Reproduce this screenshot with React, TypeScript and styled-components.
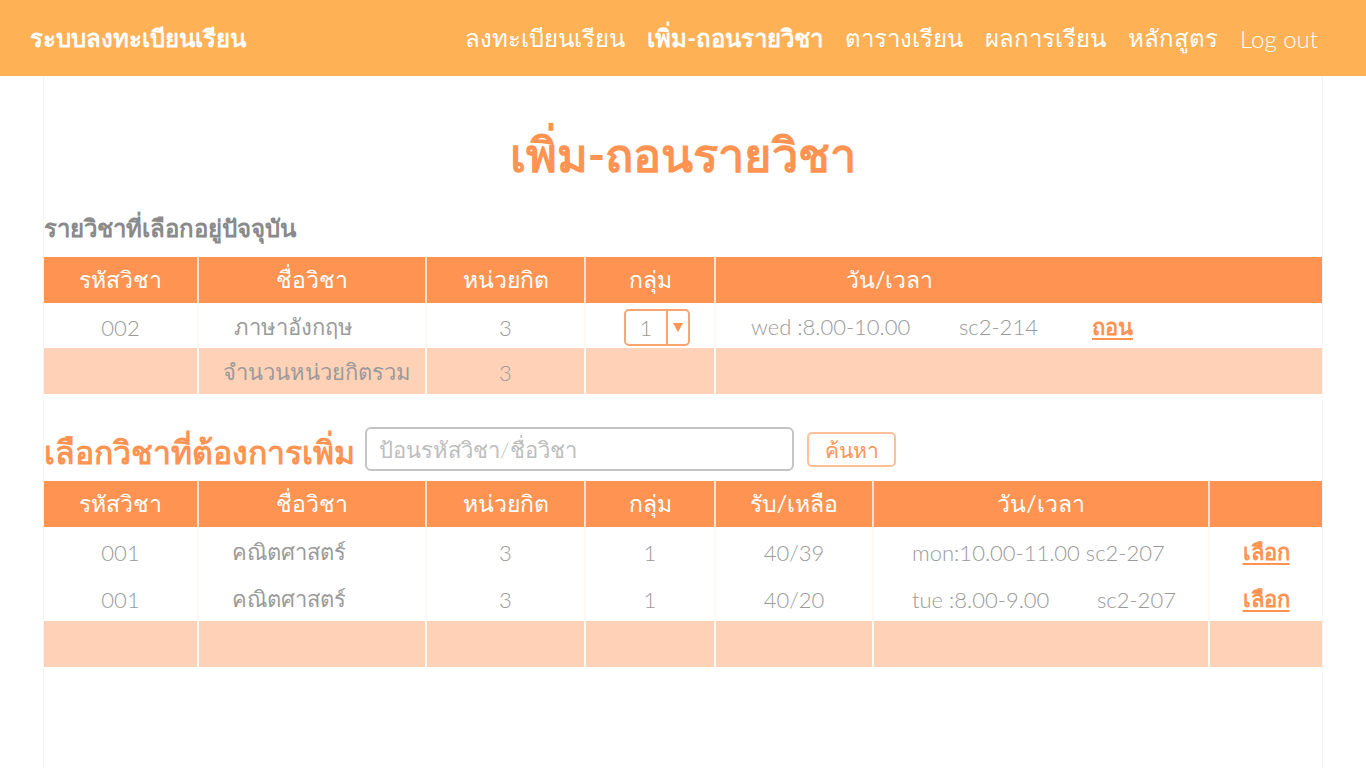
import React from "react";
import styled, { createGlobalStyle } from "styled-components";

const GlobalStyle = createGlobalStyle`
  html, body { margin: 0; padding: 0; background: #ffffff; }
  body { font-family: Lato, "Noto Sans", "DejaVu Sans", sans-serif; }
  * { box-sizing: border-box; }
`;

const ORANGE = "#FF9452";
const PEACH = "#FFD2B7";
const GRAY = "#9a9a9a";

const NavBar = styled.header`
  height: 76px;
  background: #ffb155;
  display: flex;
  align-items: center;
  justify-content: space-between;
  padding: 0 48px 0 30px;
  color: #ffffff;
`;

const Brand = styled.div`
  font-size: 24px;
  font-weight: 700;
`;

const NavList = styled.nav`
  display: flex;
  align-items: center;
  gap: 22px;
`;

const NavItem = styled.a<{ $active?: boolean }>`
  color: #ffffff;
  font-size: 24px;
  font-weight: ${(p) => (p.$active ? 700 : 300)};
  text-decoration: none;
`;

const Panel = styled.main`
  width: 1280px;
  margin: 0 auto;
  min-height: 692px;
  border-left: 1px solid #f4f4f4;
  border-right: 1px solid #f4f4f4;
  display: flex;
  flex-direction: column;
`;

const Title = styled.h1`
  margin: 51px 0 0;
  text-align: center;
  font-size: 47px;
  line-height: 54px;
  font-weight: 700;
  color: ${ORANGE};
`;

const SubHeading = styled.h2`
  margin: 32px 0 14px;
  font-size: 24px;
  line-height: 30px;
  font-weight: 700;
  color: #8a8a8a;
`;

const Table = styled.table`
  width: 100%;
  border-collapse: collapse;
  table-layout: fixed;
`;

const Th = styled.th<{ $align?: string; $pl?: number }>`
  background: ${ORANGE};
  color: #ffffff;
  font-weight: 400;
  font-size: 23px;
  height: 46px;
  padding: 0 0 0 ${(p) => p.$pl ?? 0}px;
  text-align: ${(p) => p.$align ?? "center"};
  border-right: 2px solid #ffe2d0;
  &:last-child { border-right: none; }
`;

const Tr = styled.tr<{ $peach?: boolean; $h?: number }>`
  background: ${(p) => (p.$peach ? PEACH : "#ffffff")};
  height: ${(p) => p.$h ?? 46}px;
`;

const Td = styled.td<{ $align?: string; $pl?: number }>`
  color: ${GRAY};
  font-size: 22px;
  font-weight: 300;
  padding: 3px 0 0 ${(p) => p.$pl ?? 0}px;
  text-align: ${(p) => p.$align ?? "center"};
  border-right: 2px solid #fff8f3;
  white-space: pre;
  &:last-child { border-right: none; }
`;

const Fixed = styled.span<{ $w: number }>`
  display: inline-block;
  width: ${(p) => p.$w}px;
`;

const ActionLink = styled.a`
  color: ${ORANGE};
  font-weight: 700;
  font-size: 22px;
  text-decoration: underline;
  text-decoration-thickness: 2px;
  text-underline-offset: 3px;
`;

const SelectBox = styled.div`
  display: inline-flex;
  align-items: stretch;
  width: 66px;
  height: 37px;
  border: 2px solid #ffa46e;
  border-radius: 5px;
  margin-left: 14px;
  vertical-align: middle;
`;

const SelectValue = styled.span`
  flex: 1;
  display: flex;
  align-items: center;
  justify-content: center;
  color: ${GRAY};
  font-size: 22px;
  font-weight: 300;
  border-right: 2px solid #ffa46e;
`;

const SelectArrow = styled.span`
  width: 20px;
  display: flex;
  align-items: center;
  justify-content: center;
`;

const SearchRow = styled.div`
  display: flex;
  align-items: center;
  height: 46px;
  margin: 32px 0 9px;
`;

const SectionTitle = styled.h2`
  margin: 0;
  font-size: 32px;
  font-weight: 700;
  color: ${ORANGE};
  white-space: nowrap;
  padding-top: 6px;
`;

const SearchInput = styled.input`
  width: 429px;
  height: 44px;
  margin-left: 10px;
  border: 2px solid #c4c4c4;
  border-radius: 6px;
  padding: 0 12px;
  font-family: inherit;
  font-size: 22px;
  font-weight: 300;
  color: #777;
  outline: none;
  &::placeholder { color: #bdbdbd; }
`;

const SearchButton = styled.button`
  margin-left: 13px;
  width: 89px;
  height: 35px;
  background: #ffffff;
  border: 2px solid #ffbf99;
  border-radius: 5px;
  color: ${ORANGE};
  font-family: inherit;
  font-size: 21px;
  font-weight: 300;
  padding: 0;
`;

export default function App() {
  return (
    <>
      <GlobalStyle />
      <NavBar>
        <Brand>ระบบลงทะเบียนเรียน</Brand>
        <NavList>
          <NavItem>ลงทะเบียนเรียน</NavItem>
          <NavItem $active>เพิ่ม-ถอนรายวิชา</NavItem>
          <NavItem>ตารางเรียน</NavItem>
          <NavItem>ผลการเรียน</NavItem>
          <NavItem>หลักสูตร</NavItem>
          <NavItem>Log out</NavItem>
        </NavList>
      </NavBar>
      <Panel>
        <Title>เพิ่ม-ถอนรายวิชา</Title>
        <SubHeading>รายวิชาที่เลือกอยู่ปัจจุบัน</SubHeading>
        <Table>
          <colgroup>
            <col style={{ width: 154 }} />
            <col style={{ width: 228 }} />
            <col style={{ width: 159 }} />
            <col style={{ width: 130 }} />
            <col />
          </colgroup>
          <thead>
            <tr>
              <Th>รหัสวิชา</Th>
              <Th>ชื่อวิชา</Th>
              <Th>หน่วยกิต</Th>
              <Th>กลุ่ม</Th>
              <Th $align="left" $pl={130}>วัน/เวลา</Th>
            </tr>
          </thead>
          <tbody>
            <Tr $h={45}>
              <Td>002</Td>
              <Td $align="left" $pl={35}>ภาษาอังกฤษ</Td>
              <Td>3</Td>
              <Td $align="left" $pl={24}>
                <SelectBox>
                  <SelectValue>1</SelectValue>
                  <SelectArrow>
                    <svg width="10" height="9" viewBox="0 0 10 9">
                      <polygon points="0,0 10,0 5,9" fill="#ff9452" />
                    </svg>
                  </SelectArrow>
                </SelectBox>
              </Td>
              <Td $align="left" $pl={35}>
                <Fixed $w={208}>wed :8.00-10.00</Fixed>
                <Fixed $w={133}>sc2-214</Fixed>
                <ActionLink>ถอน</ActionLink>
              </Td>
            </Tr>
            <Tr $peach>
              <Td></Td>
              <Td $align="left" $pl={24}>จำนวนหน่วยกิตรวม</Td>
              <Td>3</Td>
              <Td></Td>
              <Td></Td>
            </Tr>
          </tbody>
        </Table>

        <SearchRow>
          <SectionTitle>เลือกวิชาที่ต้องการเพิ่ม</SectionTitle>
          <SearchInput placeholder="ป้อนรหัสวิชา/ชื่อวิชา" />
          <SearchButton>ค้นหา</SearchButton>
        </SearchRow>

        <Table>
          <colgroup>
            <col style={{ width: 154 }} />
            <col style={{ width: 228 }} />
            <col style={{ width: 159 }} />
            <col style={{ width: 130 }} />
            <col style={{ width: 158 }} />
            <col style={{ width: 336 }} />
            <col />
          </colgroup>
          <thead>
            <tr>
              <Th>รหัสวิชา</Th>
              <Th>ชื่อวิชา</Th>
              <Th>หน่วยกิต</Th>
              <Th>กลุ่ม</Th>
              <Th>รับ/เหลือ</Th>
              <Th>วัน/เวลา</Th>
              <Th></Th>
            </tr>
          </thead>
          <tbody>
            <Tr $h={48}>
              <Td>001</Td>
              <Td $align="left" $pl={33}>คณิตศาสตร์</Td>
              <Td>3</Td>
              <Td>1</Td>
              <Td>40/39</Td>
              <Td $align="left" $pl={38}>mon:10.00-11.00 sc2-207</Td>
              <Td><ActionLink>เลือก</ActionLink></Td>
            </Tr>
            <Tr>
              <Td>001</Td>
              <Td $align="left" $pl={33}>คณิตศาสตร์</Td>
              <Td>3</Td>
              <Td>1</Td>
              <Td>40/20</Td>
              <Td $align="left" $pl={38}>
                <Fixed $w={185}>tue :8.00-9.00</Fixed>sc2-207
              </Td>
              <Td><ActionLink>เลือก</ActionLink></Td>
            </Tr>
            <Tr $peach>
              <Td></Td>
              <Td></Td>
              <Td></Td>
              <Td></Td>
              <Td></Td>
              <Td></Td>
              <Td></Td>
            </Tr>
          </tbody>
        </Table>
      </Panel>
    </>
  );
}
